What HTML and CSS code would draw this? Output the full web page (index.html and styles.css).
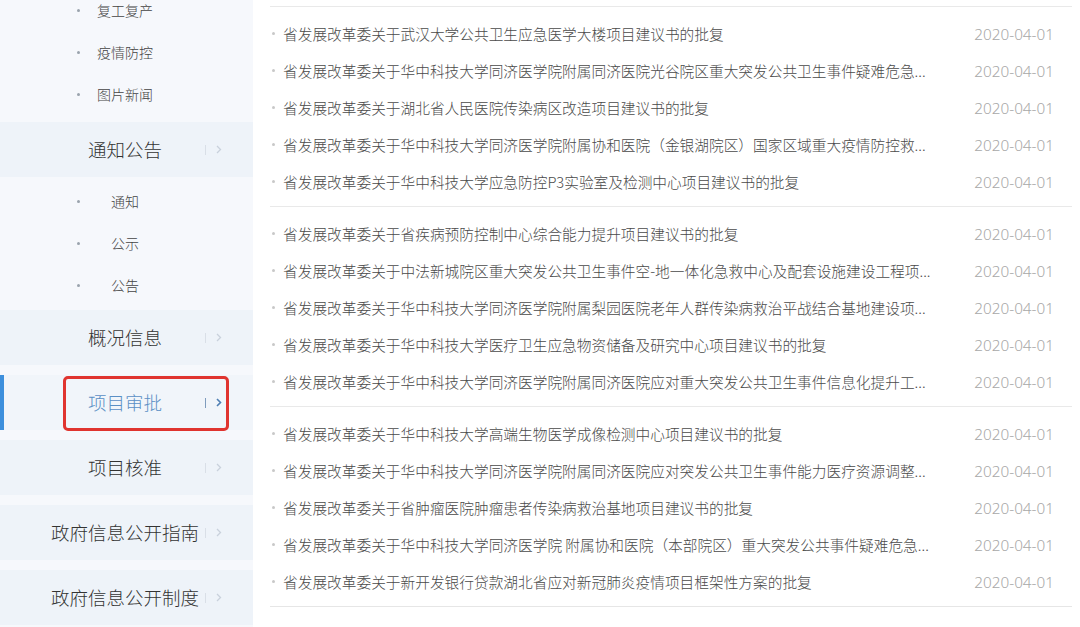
FILE: index.html
```html
<!DOCTYPE html>
<html lang="zh-CN">
<head>
<meta charset="utf-8">
<title>项目审批</title>
<link rel="stylesheet" href="styles.css">
</head>
<body>
<div class="page">
  <aside class="sidebar">
    <ul class="sub sub-first">
      <li><span class="dot"></span><span class="sub-text">复工复产</span></li>
      <li><span class="dot"></span><span class="sub-text">疫情防控</span></li>
      <li><span class="dot"></span><span class="sub-text">图片新闻</span></li>
    </ul>
    <div class="main-item open">
      <span class="main-text">通知公告</span>
      <span class="arrow"><span class="bar"></span><svg width="6" height="9" viewBox="0 0 6 9"><path d="M1 1l3.5 3.5L1 8" fill="none" stroke="currentColor" stroke-width="1.3"/></svg></span>
    </div>
    <ul class="sub sub-second">
      <li><span class="dot"></span><span class="sub-text">通知</span></li>
      <li><span class="dot"></span><span class="sub-text">公示</span></li>
      <li><span class="dot"></span><span class="sub-text">公告</span></li>
    </ul>
    <div class="main-item">
      <span class="main-text">概况信息</span>
      <span class="arrow"><span class="bar"></span><svg width="6" height="9" viewBox="0 0 6 9"><path d="M1 1l3.5 3.5L1 8" fill="none" stroke="currentColor" stroke-width="1.3"/></svg></span>
    </div>
    <div class="main-item active">
      <span class="main-text">项目审批</span>
      <span class="arrow"><span class="bar"></span><svg width="6" height="9" viewBox="0 0 6 9"><path d="M1 1l3.5 3.5L1 8" fill="none" stroke="currentColor" stroke-width="1.6"/></svg></span>
      <span class="mark"></span>
    </div>
    <div class="main-item">
      <span class="main-text">项目核准</span>
      <span class="arrow"><span class="bar"></span><svg width="6" height="9" viewBox="0 0 6 9"><path d="M1 1l3.5 3.5L1 8" fill="none" stroke="currentColor" stroke-width="1.3"/></svg></span>
    </div>
    <div class="main-item">
      <span class="main-text">政府信息公开指南</span>
      <span class="arrow"><span class="bar"></span><svg width="6" height="9" viewBox="0 0 6 9"><path d="M1 1l3.5 3.5L1 8" fill="none" stroke="currentColor" stroke-width="1.3"/></svg></span>
    </div>
    <div class="main-item">
      <span class="main-text">政府信息公开制度</span>
      <span class="arrow"><span class="bar"></span><svg width="6" height="9" viewBox="0 0 6 9"><path d="M1 1l3.5 3.5L1 8" fill="none" stroke="currentColor" stroke-width="1.3"/></svg></span>
    </div>
  </aside>

  <main class="content">
    <ul class="group">
      <li class="row"><span class="rdot"></span><span class="title">省发展改革委关于武汉大学公共卫生应急医学大楼项目建议书的批复</span><span class="date">2020-04-01</span></li>
      <li class="row"><span class="rdot"></span><span class="title">省发展改革委关于华中科技大学同济医学院附属同济医院光谷院区重大突发公共卫生事件疑难危急...</span><span class="date">2020-04-01</span></li>
      <li class="row"><span class="rdot"></span><span class="title">省发展改革委关于湖北省人民医院传染病区改造项目建议书的批复</span><span class="date">2020-04-01</span></li>
      <li class="row"><span class="rdot"></span><span class="title">省发展改革委关于华中科技大学同济医学院附属协和医院（金银湖院区）国家区域重大疫情防控救...</span><span class="date">2020-04-01</span></li>
      <li class="row"><span class="rdot"></span><span class="title">省发展改革委关于华中科技大学应急防控P3实验室及检测中心项目建议书的批复</span><span class="date">2020-04-01</span></li>
    </ul>
    <ul class="group">
      <li class="row"><span class="rdot"></span><span class="title">省发展改革委关于省疾病预防控制中心综合能力提升项目建议书的批复</span><span class="date">2020-04-01</span></li>
      <li class="row"><span class="rdot"></span><span class="title">省发展改革委关于中法新城院区重大突发公共卫生事件空-地一体化急救中心及配套设施建设工程项...</span><span class="date">2020-04-01</span></li>
      <li class="row"><span class="rdot"></span><span class="title">省发展改革委关于华中科技大学同济医学院附属梨园医院老年人群传染病救治平战结合基地建设项...</span><span class="date">2020-04-01</span></li>
      <li class="row"><span class="rdot"></span><span class="title">省发展改革委关于华中科技大学医疗卫生应急物资储备及研究中心项目建议书的批复</span><span class="date">2020-04-01</span></li>
      <li class="row"><span class="rdot"></span><span class="title">省发展改革委关于华中科技大学同济医学院附属同济医院应对重大突发公共卫生事件信息化提升工...</span><span class="date">2020-04-01</span></li>
    </ul>
    <ul class="group">
      <li class="row"><span class="rdot"></span><span class="title">省发展改革委关于华中科技大学高端生物医学成像检测中心项目建议书的批复</span><span class="date">2020-04-01</span></li>
      <li class="row"><span class="rdot"></span><span class="title">省发展改革委关于华中科技大学同济医学院附属同济医院应对突发公共卫生事件能力医疗资源调整...</span><span class="date">2020-04-01</span></li>
      <li class="row"><span class="rdot"></span><span class="title">省发展改革委关于省肿瘤医院肿瘤患者传染病救治基地项目建议书的批复</span><span class="date">2020-04-01</span></li>
      <li class="row"><span class="rdot"></span><span class="title">省发展改革委关于华中科技大学同济医学院 附属协和医院（本部院区）重大突发公共事件疑难危急...</span><span class="date">2020-04-01</span></li>
      <li class="row"><span class="rdot"></span><span class="title">省发展改革委关于新开发银行贷款湖北省应对新冠肺炎疫情项目框架性方案的批复</span><span class="date">2020-04-01</span></li>
    </ul>
  </main>
</div>
</body>
</html>
```

FILE: styles.css
```css
* { box-sizing: border-box; }

html, body {
  margin: 0;
  padding: 0;
  height: 100%;
  overflow: hidden;
  background: #ffffff;
  font-family: "Noto Sans CJK SC", "Noto Sans", sans-serif;
}

ul { list-style: none; margin: 0; padding: 0; }

.page {
  display: flex;
  height: 627px;
}

/* ---------- sidebar ---------- */
.sidebar {
  width: 253px;
  flex: none;
  background: #f6f8fc;
  display: flex;
  flex-direction: column;
}

.sub li {
  height: 42px;
  display: flex;
  align-items: center;
  padding-left: 77px;
  font-size: 14px;
  font-weight: 300;
  color: #444;
}

.dot {
  width: 3px;
  height: 3px;
  border-radius: 50%;
  background: #9aa3ad;
  flex: none;
}

.sub-first {
  margin-top: -11px;
  padding-bottom: 7px;
}
.sub-first .sub-text { margin-left: 17px; }

.sub-second {
  padding-top: 3px;
  padding-bottom: 4px;
}
.sub-second .sub-text { margin-left: 31px; }

.main-item {
  position: relative;
  height: 55px;
  flex: none;
  display: grid;
  grid-template-columns: 1fr;
  align-items: center;
  background: #eef3f9;
  margin-bottom: 10px;
}
.main-item.open { margin-bottom: 0; }

.main-item > .main-text,
.main-item > .arrow {
  grid-area: 1 / 1;
}

.main-text {
  justify-self: center;
  font-size: 18.5px;
  font-weight: 300;
  color: #333;
  line-height: 1;
  margin-left: -3px;
}

.arrow {
  justify-self: end;
  margin-right: 31px;
  display: flex;
  align-items: center;
  gap: 10px;
  color: #c9d1dc;
}

.arrow .bar {
  width: 1px;
  height: 10px;
  background: #d9dfe7;
}

.arrow svg { display: block; }

.main-item.active {
  background: #f1f5fa;
  box-shadow: inset 4px 0 0 #3d8fdc;
}
.main-item.active .main-text { color: #5a8fc5; }
.main-item.active .arrow { color: #4f7fb3; }
.main-item.active .arrow .bar { background: #7f9cbd; }

.mark {
  position: absolute;
  left: 63px;
  top: 1px;
  width: 166px;
  height: 55px;
  border: 3px solid #e0342f;
  border-radius: 5px;
}

/* ---------- content ---------- */
.content {
  flex: 1;
  padding: 6px 8px 0 17px;
  background: #ffffff;
}

.group {
  border-top: 1px solid #e9e9e9;
  padding: 8px 0 6px;
}

.row {
  height: 37px;
  display: flex;
  align-items: center;
  padding-right: 18px;
}

.rdot {
  width: 3px;
  height: 3px;
  border-radius: 50%;
  background: #c8c8c8;
  margin-left: 2px;
  flex: none;
}

.title {
  margin-left: 8px;
  font-size: 14.7px;
  font-weight: 300;
  color: #4a4a4a;
  white-space: nowrap;
  overflow: hidden;
  flex: 1;
}

.date {
  font-family: "Noto Sans", sans-serif;
  font-size: 15.3px;
  font-weight: 300;
  color: #a8a8a8;
  white-space: nowrap;
  flex: none;
}

.content::after {
  content: "";
  display: block;
  border-top: 1px solid #e6e6e6;
}
```
